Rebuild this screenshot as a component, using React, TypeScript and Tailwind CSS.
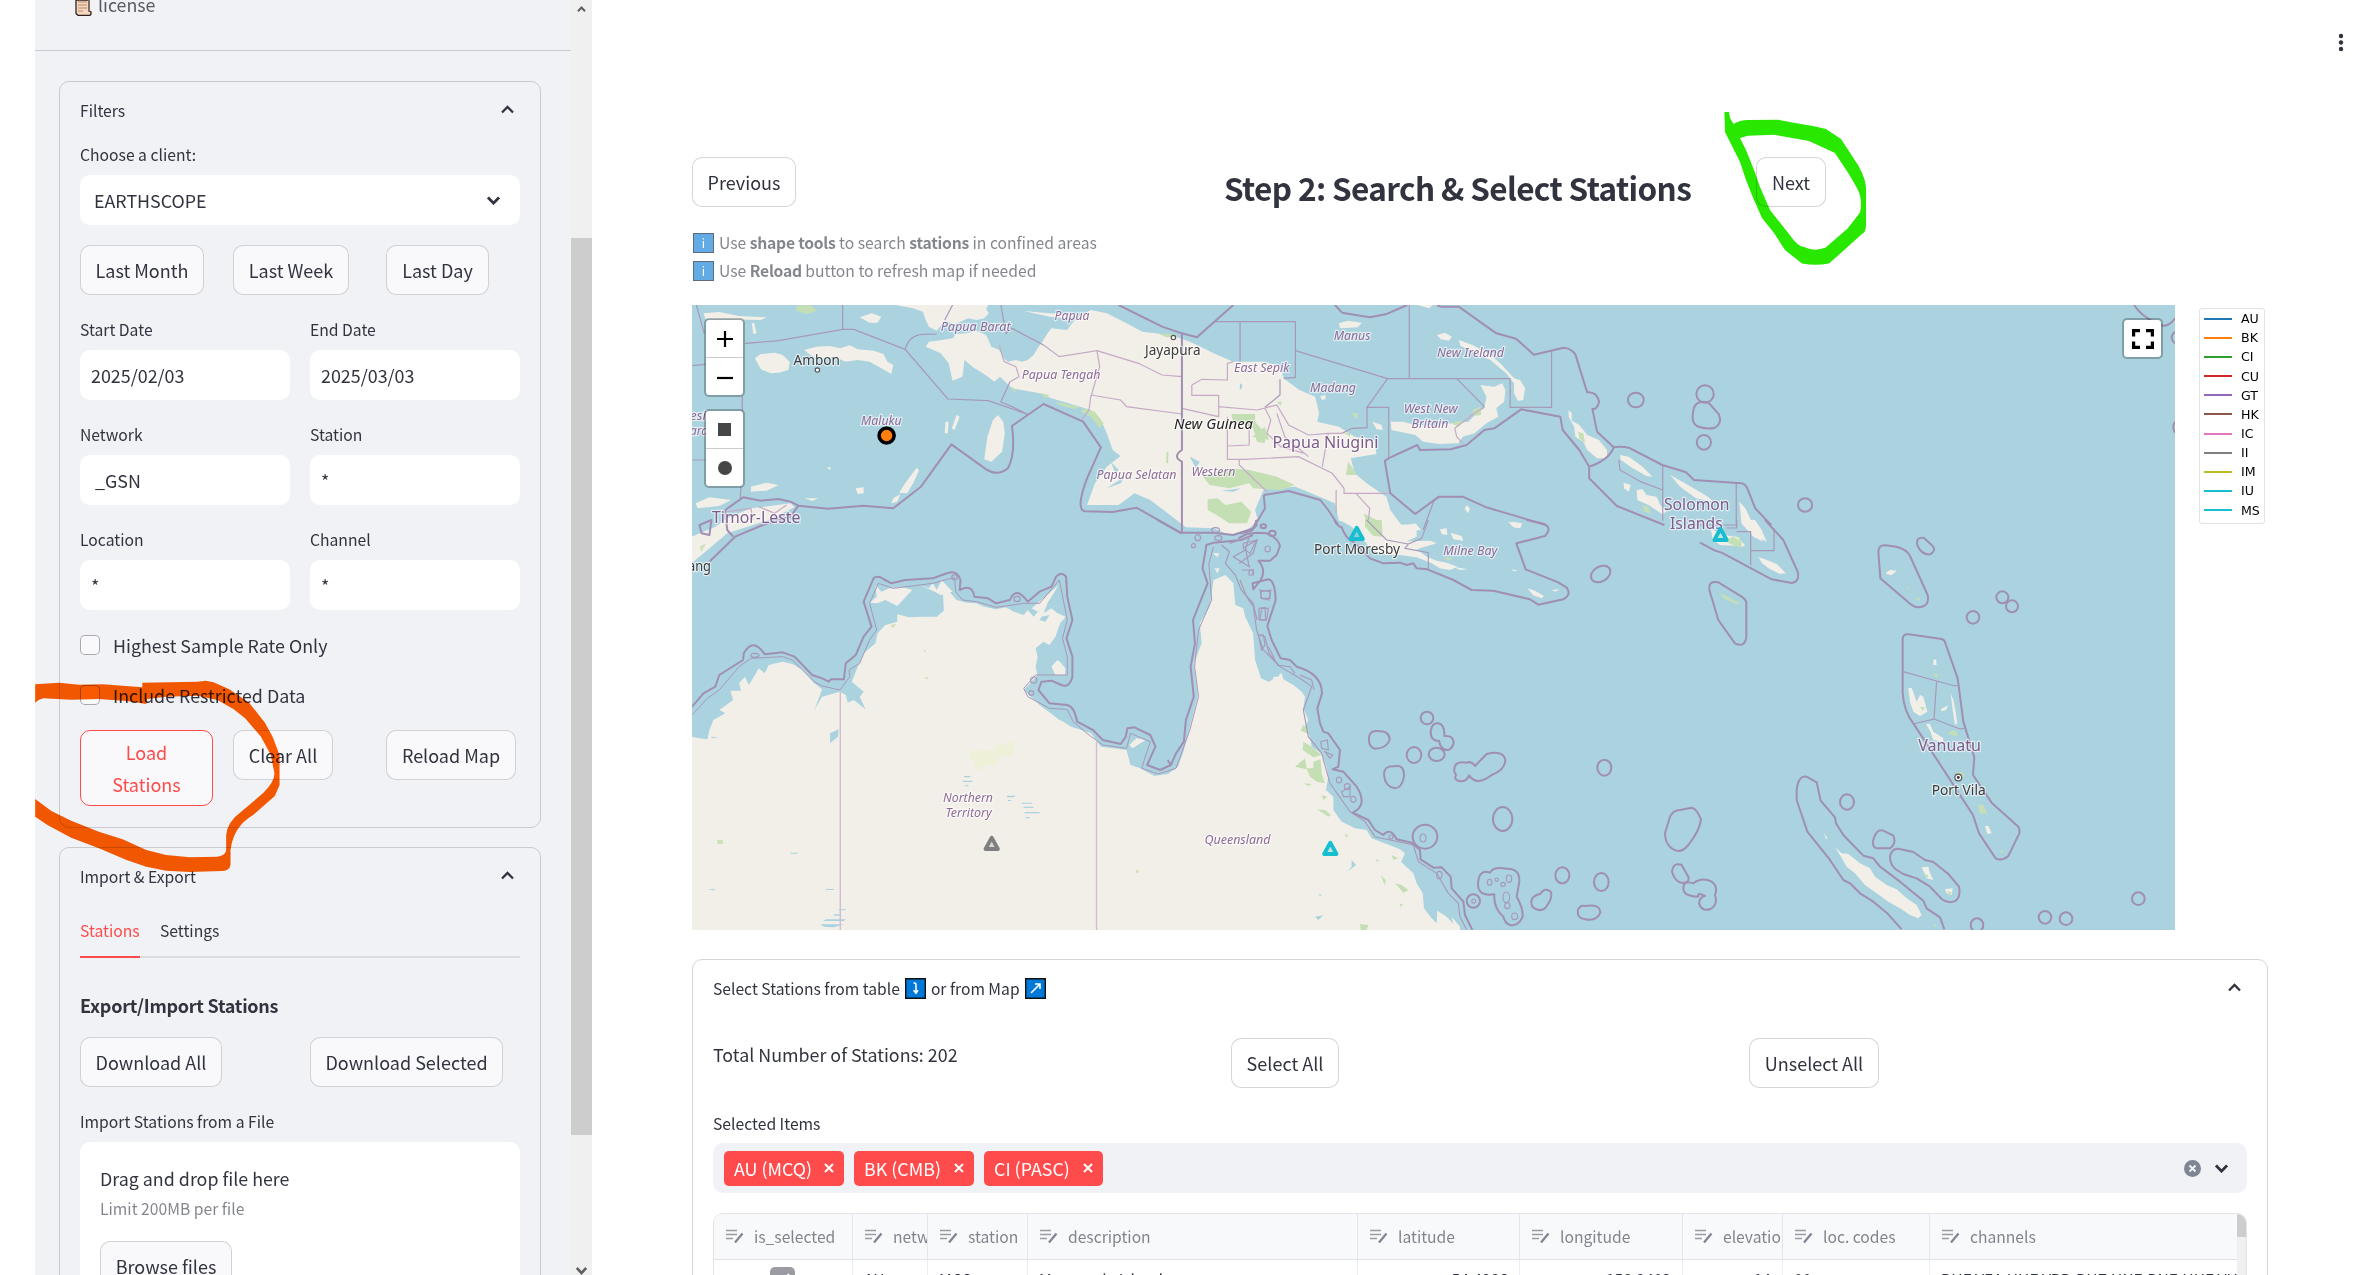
import React from "react";

const Chevron = ({ down = false, bold = false }: { down?: boolean; bold?: boolean }) => (
  <svg width="13" height="9" viewBox="0 0 13 9" className={down ? "rotate-180" : ""}>
    <path d="M1 7.6 6.5 1.9 12 7.6" fill="none" stroke="#31333f" strokeWidth={bold ? 2.8 : 2.2} />
  </svg>
);

const Button = ({ children, className = "" }: { children: React.ReactNode; className?: string }) => (
  <button
    className={`h-[50px] shrink-0 rounded-[10px] border border-[#31333f]/20 text-center text-[18px] leading-[32px] whitespace-nowrap text-[#31333f] ${className}`}
  >
    {children}
  </button>
);

const Label = ({ children }: { children: React.ReactNode }) => (
  <div className="h-[30px] pt-px text-[15.7px] leading-[18px]">{children}</div>
);

const Field = ({ label, value, inset = "pl-[11px]" }: { label: string; value: string; inset?: string }) => (
  <div className="h-[105px] w-[210px]">
    <Label>{label}</Label>
    <div className={`h-[50px] rounded-[10px] bg-white text-[17.9px] leading-[50px] ${inset}`}>{value}</div>
  </div>
);

const Check = ({ label }: { label: string }) => (
  <div className="flex h-[50px] items-start gap-[13px] text-[17.85px] leading-[20px]">
    <span className="size-5 rounded-[5px] border border-[#31333f]/40 bg-[#f9f9fb]" />
    {label}
  </div>
);

function Sidebar() {
  return (
    <aside className="ml-[35px] flex h-[1275px] w-[557px] shrink-0 overflow-hidden bg-[#f0f2f6]">
      <div className="w-[536px]">
        <div className="flex h-[51px] items-start gap-1.5 border-b border-[#c9cbd1] pl-[40px]">
          <svg width="17" height="16" viewBox="0 0 17 16">
            <path d="M1 0H14V11l2 1v2l-1 1.3H3L1 13.5Z" fill="#f6d7bf" stroke="#2b2220" strokeWidth="1.3" />
            <path d="M14 0V12" stroke="#8b6f63" strokeWidth="1.6" />
            <path d="M3 2h9M3 5h9M3 8h9M3 11h5" stroke="#b98a6d" strokeWidth="1" />
          </svg>
          <span className="-mt-[6px] text-[17.8px] leading-[20px] text-[#31333f]/80">license</span>
        </div>
        <section className="mt-[30px] ml-[24px] h-[747px] w-[482px] rounded-[10px] border border-[#31333f]/20 px-[20px]">
          <div className="flex h-[63px] items-start justify-between pt-[20px] pr-[6px] text-[15.7px] leading-[18px]">
            Filters
            <span className="pt-[3px]">
              <Chevron />
            </span>
          </div>
          <Label>Choose a client:</Label>
          <div className="flex h-[50px] items-center justify-between rounded-[10px] bg-white pr-[20px] pl-[14px] text-[17.85px]">
            EARTHSCOPE
            <Chevron down bold />
          </div>
          <div className="mt-5 grid grid-cols-[153px_153px_1fr]">
            <Button className="w-[124px] bg-[#f9f9fb]">Last Month</Button>
            <Button className="w-[116px] bg-[#f9f9fb]">Last Week</Button>
            <Button className="w-[103px] bg-[#f9f9fb]">Last Day</Button>
          </div>
          <div className="mt-[25px] grid grid-cols-2 gap-x-5">
            <Field label="Start Date" value="2025/02/03" />
            <Field label="End Date" value="2025/03/03" />
            <Field label="Network" value="_GSN" inset="pl-[15px]" />
            <Field label="Station" value="*" />
            <Field label="Location" value="*" />
            <Field label="Channel" value="*" />
          </div>
          <Check label="Highest Sample Rate Only" />
          <Check label="Include Restricted Data" />
          <div className="-mt-[5px] grid grid-cols-[153px_153px_1fr]">
            <button className="h-[76px] w-[133px] rounded-[10px] border border-[#ff4b4b] bg-[#f9f9fb] text-[18px] leading-[32px] text-[#ff4b4b]">
              Load
              <br />
              Stations
            </button>
            <Button className="w-[100px] bg-[#f9f9fb]">Clear All</Button>
            <Button className="w-[130px] bg-[#f9f9fb]">Reload Map</Button>
          </div>
        </section>
        <section className="mt-[19px] ml-[24px] h-[600px] w-[482px] rounded-[10px] border border-[#31333f]/20 px-[20px]">
          <div className="flex h-[74px] items-start justify-between pt-[20px] pr-[6px] text-[15.7px] leading-[18px]">
            Import &amp; Export
            <span className="pt-[3px]">
              <Chevron />
            </span>
          </div>
          <div className="flex h-[36px] gap-5 border-b-2 border-[#dcdde3] text-[15.7px] leading-[18px]">
            <span className="h-[36px] w-[60px] border-b-2 border-[#ff4b4b] text-[#ff4b4b]">Stations</span>
            <span>Settings</span>
          </div>
          <h4 className="mt-[35px] text-[18px] leading-[24px] font-bold tracking-[-0.27px]">Export/Import Stations</h4>
          <div className="mt-[20px] grid grid-cols-2 gap-x-5">
            <Button className="w-[142px] bg-[#f9f9fb]">Download All</Button>
            <Button className="w-[193px] bg-[#f9f9fb]">Download Selected</Button>
          </div>
          <div className="mt-[25px]">
            <Label>Import Stations from a File</Label>
          </div>
          <div className="h-[200px] rounded-[10px] bg-white pt-[24px] pl-5">
            <div className="text-[17.85px] leading-[24px]">Drag and drop file here</div>
            <div className="mt-[9px] text-[15.7px] leading-[20px] text-[#31333f]/60">Limit 200MB per file</div>
            <Button className="mt-[22px] w-[132px] bg-[#f9f9fb]">Browse files</Button>
          </div>
        </section>
      </div>
      <div className="flex w-[21px] flex-col items-center bg-[#f0f0f0]">
        <svg className="mt-1.5" width="11" height="8" viewBox="0 0 11 8">
          <path d="M.8 7 5.5 2 10.2 7" fill="none" stroke="#606060" strokeWidth="2.6" />
        </svg>
        <div className="mt-[226px] h-[897px] w-full shrink-0 bg-[#cdcdcd]" />
        <svg className="mt-[132px] shrink-0" width="11" height="8" viewBox="0 0 11 8">
          <path d="M.8 1 5.5 6 10.2 1" fill="none" stroke="#606060" strokeWidth="2.6" />
        </svg>
      </div>
    </aside>
  );
}

type Place = [string, number, number, number, "region" | "city" | "country" | "island"];
const places: Place[] = [
  ["Papua Barat", 940.7, 331.3, 70, "region"],
  ["Papua", 1054.6, 320.3, 34.8, "region"],
  ["Papua Tengah", 1021.8, 379.3, 78.7, "region"],
  ["Papua Selatan", 1096.5, 479.3, 80, "region"],
  ["Western", 1191.4, 475.7, 44, "region"],
  ["East Sepik", 1234, 372, 55.4, "region"],
  ["Maluku", 861, 425.3, 40.6, "region"],
  ["Ambon", 793.6, 365.3, 46.4, "city"],
  ["Jayapura", 1145, 355, 55.5, "city"],
  ["Timor-Leste", 712, 523, 88.4, "country"],
  ["New Guinea", 1174, 429, 79, "island"],
  ["Papua Niugini", 1272.4, 448, 106, "country"],
  ["Manus", 1333.7, 340.3, 36.8, "region"],
  ["New Ireland", 1437, 357, 67, "region"],
  ["Madang", 1310, 392, 46, "region"],
  ["West New", 1403.7, 413.3, 54, "region"],
  ["Britain", 1411.6, 428, 36.8, "region"],
  ["Solomon", 1664, 510, 65.5, "country"],
  ["Islands", 1670, 529, 52.7, "country"],
  ["Port Moresby", 1314, 554, 86, "city"],
  ["Milne Bay", 1443.3, 555.3, 54, "region"],
  ["Northern", 943, 801.7, 50, "region"],
  ["Territory", 945.5, 816.7, 46.2, "region"],
  ["Queensland", 1204.5, 843.7, 66, "region"],
  ["ang", 688, 571, 23, "city"],
  ["esi", 690, 419.5, 16, "region"],
  ["ara", 690, 434.5, 18, "region"],
  ["Vanuatu", 1918.3, 750.7, 62.7, "country"],
  ["Port Vila", 1931.7, 795, 54, "city"],
];
const placeStyle = {
  region: "text-[12.5px] italic fill-[#8d6b97]",
  city: "text-[14px] fill-[#3c3c3c]",
  country: "text-[15.5px] fill-[#7d5c8c]",
  island: "text-[14px] italic fill-[#222222]",
};

const Ring = ({ d }: { d: number[][] }) => (
  <>
    {d.map(([x, y, rx, ry, rot = 0], i) => (
      <ellipse key={i} cx={x} cy={y} rx={rx} ry={ry} transform={`rotate(${rot} ${x} ${y})`} />
    ))}
  </>
);

const Triangle = ({ x, y, color }: { x: number; y: number; color: string }) => (
  <path
    d={`M${x} ${y - 5.8}L${x + 6.2} ${y + 5.5}H${x - 6.2}Z`}
    fill={color}
    fillOpacity="0.2"
    stroke={color}
    strokeWidth="3.8"
    strokeLinejoin="round"
  />
);

function MapView() {
  return (
    <svg width="1483" height="625" viewBox="692 305 1483 625" className="block bg-[#aad3df]">
      {/* northern half */}
      <g transform="translate(660 100) scale(.3954 .33333)" className="[&_*]:[vector-effect:non-scaling-stroke]">
        <g fill="#f2efe9">
          <path d="M595 615 640 625 665 635 672 660 680 680 700 692 720 662 745 672 760 665 780 655 800 660 820 655 832 640 825 628 830 615Z" />
          <path d="M672 740 680 725 700 722 740 715 750 702 775 700 800 692 825 705 838 740 858 750 868 775 880 785 900 780 915 785 930 780 945 765 955 745 970 720 980 700 990 685 1030 690 1045 665 1060 650 1075 640 1090 630 1130 640 1180 670 1220 695 1290 705 1340 725 1370 742 1400 760 1450 785 1525 785 1568 798 1577 835 1617 870 1657 890 1667 940 1662 965 1717 980 1757 1010 1807 1020 1812 1062 1747 1075 1757 1120 1787 1150 1837 1190 1847 1230 1877 1278 1790 1278 1717 1262 1707 1210 1647 1180 1607 1160 1527 1168 1505 1230 1512 1262 1485 1290 1440 1305 1400 1285 1330 1282 1290 1245 1240 1200 1200 1180 1160 1215 1080 1215 1100 1150 1130 1100 1165 1068 1145 1050 1130 1000 1115 960 1090 930 1020 905 990 895 960 880 890 865 860 830 845 845 830 830 790 800 770 780 765 830 740 842 730 790 710 760Z" />
          <path d="M920 633 985 640 1060 645 1030 655 985 650Z" />
          <path d="M240 775 255 762 290 758 310 765 328 785 325 810 300 818 280 820 255 808Z" />
          <path d="M365 750 395 740 430 738 455 745 480 736 500 748 540 752 565 762 575 785 590 795 585 822 560 805 530 785 500 780 470 785 440 770 400 775 380 765Z" />
          <path d="M110 640 150 636 200 648 270 652 255 660 180 658 115 658ZM232 670 238 668 244 700 236 702ZM505 652 535 640 560 650 550 668 530 668ZM842 960 855 945 868 965 872 1000 865 1055 838 1085 820 1078 828 1010ZM750 945 758 950 745 990 738 985ZM722 965 730 965 728 1000 720 1000ZM645 1110 650 1103 655 1112 640 1150 625 1180 605 1178 620 1150ZM230 1160 270 1148 300 1155 270 1172 230 1175ZM90 1210 125 1192 180 1200 150 1218 95 1225ZM495 1165 515 1162 515 1180 500 1182ZM590 1195 608 1182 600 1205 585 1210ZM422 1103 432 1101 430 1110ZM365 1195 400 1195 385 1203Z" />
          <path d="M170 1255 230 1225 330 1210 340 1222 270 1262 170 1300 150 1320 80 1390 80 1310 140 1280Z" />
          {/* Bismarck archipelago and the Solomons */}
          <path d="M1717 670 1740 662 1775 668 1765 682 1720 685ZM1965 705 1985 698 2003 710 1995 722 1975 718ZM2020 720 2055 735 2075 748 2100 765 2125 790 2145 815 2160 835 2175 840 2188 865 2183 900 2170 903 2160 880 2160 850 2140 820 2100 780 2060 755 2025 738Z" />
          <path d="M2075 855 2110 860 2130 850 2138 870 2135 905 2115 925 2120 950 2090 970 2060 1000 2030 1010 2020 1030 1970 1032 1930 1025 1910 1005 1850 990 1848 965 1880 965 1910 975 1960 978 2000 970 2045 965 2065 940 2085 925 2090 890Z" />
          <path d="M1802 965 1825 975 1828 990 1812 988ZM1670 888 1683 885 1683 898 1674 900Z" />
          <path d="M2298 930 2306 940 2306 962 2325 975 2345 1005 2375 1020 2395 1050 2395 1075 2370 1075 2345 1050 2335 1025 2315 1010 2312 980 2298 950ZM2428 1065 2450 1070 2485 1100 2510 1130 2495 1128 2460 1105 2430 1080ZM2555 1125 2600 1155 2650 1190 2665 1205 2620 1195 2580 1160ZM2437 1148 2455 1155 2450 1175 2438 1165ZM2470 1170 2485 1168 2495 1185 2520 1190 2530 1215 2545 1235 2535 1243 2500 1215 2472 1200ZM2730 1205 2745 1225 2765 1275 2790 1325 2765 1310 2735 1270Z" />
          <path d="M1915 615 1955 615 1945 625ZM2040 1215 2048 1225 2045 1240 2035 1228ZM2155 1265 2180 1270 2175 1285 2160 1280ZM1880 1280 1910 1270 1925 1290 1890 1292Z" />
        </g>
        <g fill="#c5dfb5">
          <path d="M1372 1128 1440 1105 1490 1110 1560 1130 1605 1155 1570 1170 1530 1168 1500 1165 1490 1150 1440 1165 1390 1155ZM1385 1198 1410 1195 1430 1215 1470 1205 1495 1235 1485 1270 1440 1270 1400 1240 1385 1230ZM1445 942 1505 942 1505 965 1530 1000 1530 1030 1510 1025 1500 985 1448 960ZM1070 925 1100 935 1122 970 1112 985 1090 950 1065 935ZM1740 1085 1750 1100 1762 1125 1735 1125ZM1780 1240 1820 1265 1835 1290 1790 1290ZM345 618 380 615 397 632 370 642 345 632ZM960 878 985 885 975 895ZM1000 905 1060 920 1050 928 1010 915ZM885 858 900 868 895 875ZM1262 702 1300 702 1310 710 1280 712ZM1281 1055 1286 1055 1285 1090 1280 1090ZM1498 1010 1530 980 1540 1020ZM2055 930 2075 920 2077 945 2060 948ZM2000 970 2030 960 2020 980ZM1750 940 1765 940 1762 960ZM1725 995 1745 1000 1745 1010ZM2322 995 2335 1000 2340 1030 2325 1015ZM2485 1215 2500 1220 2505 1240 2490 1235ZM1560 905 1572 905 1570 918Z" />
        </g>
        <path d="M1467 850 1473 855 1470 870 1466 865ZM1340 1070 1365 1085 1355 1105ZM1130 1165 1175 1130 1165 1150ZM1420 1172 1470 1165 1450 1175ZM1140 1085 1160 1110 1152 1120Z" fill="#aad3df" />
        <g fill="none" stroke="#a798b8" strokeWidth="1.2">
          <path d="M462 615V688M215 730 300 722 462 688 490 688 620 748 728 897 830 902 930 943M620 748Q630 705 665 703L700 702M740 615 720 660M862 615 875 700 890 685 970 735M208 888V960M205 1160 203 1195M82 797 115 793M82 1080H115M92 615 112 700M930 943 890 920 862 906 885 845M1405 665H1607V832L1578 835M1467 665V785M1895 615V835M1607 752 1840 836H2150V922H2255V752M1840 836 1788 922H1843V1075M1788 922V983L1750 985 1725 1000M2015 836 2085 920M2536 1097V1262M2722 1152V1275H2600M2425 1080 2428 1110 2480 1145 2536 1170M1958 1200 1930 1290M1568 838V885L1530 922" />
          <path d="M858 735 870 785 900 800 908 830 885 845M970 735 1010 770 1105 752 1112 800 1090 890M1105 752 1210 790 1270 825 1320 830M1090 885 1165 900 1180 920 1320 942M1090 885 1085 930 1068 958M1320 925 1413 950V920L1510 930 1560 915 1590 975 1640 1005 1690 1000 1725 1000M1345 855 1370 838 1435 840V790L1450 785M1345 855V886H1413V930M1435 950V1078L1480 1078 1615 1070 1700 1120 1730 1165V1180H1845M1465 1080V1095L1535 1175M1490 970 1490 1035 1435 1038M1530 925 1545 960 1535 1000 1570 1040 1630 1060M1560 940 1580 1010 1640 1070M1690 1000 1675 1100M1710 1170V1240M1760 1180 1795 1225 1790 1275M2085 920 2060 940 2010 985 2015 1010 2030 1030M170 1235 230 1225 235 1260M250 1220 290 1240 320 1215" stroke="#c5a9c6" />
        </g>
        <g fill="none" stroke="#a08fb3" strokeWidth="2" strokeLinejoin="round">
          <path d="M1160 615 1270 680 1320 700V1050Q1295 1070 1320 1085V1300M1320 700 1358 712 1450 615M165 1230 210 1192 255 1202 300 1197 330 1205 350 1217 425 1226 515 1217 590 1225 660 1160 737 1033 825 1108 Q855 1130 880 1105 900 1060 890 978L970 912 1070 965 1115 1042 1080 1135 Q1050 1230 1075 1234L1145 1236 1205 1223 1320 1300M350 1217 330 1250 260 1275 190 1310 125 1385M165 1230 170 1290 185 1310M100 1275 105 1300 125 1305 130 1260Z" />
          <path d="M1707 615 1725 638 1795 652 1835 643 1890 615M1965 615 1975 620 2020 620 2115 700 2165 716 2210 764 2285 743 Q2305 745 2315 763L2345 877Q2370 875 2375 905 2370 930 2358 927L2370 995 2412 1042Q2400 1080 2350 1100M2412 1042Q2430 1038 2450 1043L2535 1095 2595 1117 2615 1140 2735 1150Q2745 1152 2750 1165L2770 1225 2810 1275M1842 1075 1833 1083 1847 1180 1910 1242 1970 1190 2030 1190 2090 1222 2170 1250 2240 1275M1842 1075 1915 1035 1922 1050 2000 1048 2040 1035 2085 990 2110 985 2178 928 2277 950 2283 990 2325 1050 2350 1100V1135L2420 1218 2540 1275M1527 1185 1590 1173 1670 1200 1690 1230 1715 1275M1527 1185 1530 1225 1510 1265" />
          <Ring d={[[2468, 900, 20, 22], [2643, 882, 22, 26], [2640, 1027, 18, 22], [2896, 1215, 18, 20]]} />
          <path d="M2630 907Q2646 902 2655 912L2678 943Q2687 970 2668 983 2645 990 2622 978 2607 965 2613 935 2615 912 2630 907Z" />
        </g>
      </g>
      {/* northern Australia */}
      <g transform="translate(660 520) scale(.3954 .33333)" className="[&_*]:[vector-effect:non-scaling-stroke]">
        <path
          fill="#f2efe9"
          d="M81 650 100 655 120 658 125 630 135 600 165 580 150 570 185 540 178 512 205 512 200 490 215 470 225 495 240 465 250 445 265 460 275 435 310 425 335 432 360 450 390 490 410 508 400 540 390 570 410 530 455 515 470 525 475 548 490 540 520 568 505 530 515 515 485 485 500 440 515 400 545 370 550 340 570 315 600 305 600 283 630 292 665 290 700 290 718 272 715 210 730 212 750 240 775 248 800 250 820 260 850 268 875 262 895 275 920 285 930 270 945 290 985 235 970 280 990 265 1005 280 1026 290 1012 310 1000 350 985 375 970 365 950 385 955 410 950 440 955 465 920 510 960 555 1000 590 1040 620 1090 640 1115 680 1180 690 1190 735 1215 745 1250 768 1285 762 1310 740 1325 690 1340 620 1360 530 1350 430 1370 370 1365 310 1390 260 1400 180 1430 165 1450 190 1455 255 1475 265 1480 290 1500 340 1505 420 1520 475 1540 485 1570 465 V1230H81Z"
        />
        <path fill="#f2efe9" d="M545 195 560 215 580 205 610 200 638 210 600 258 570 240 550 250 530 248 548 230ZM655 195 680 205 690 190 700 210 712 180 740 215 710 225 690 212ZM1187 675 1205 655 1228 660 1195 685ZM1005 420 1015 430 1025 445 1025 465 1000 465 990 440ZM940 265 1008 195 985 240 955 275ZM1398 100 1415 100 1410 112ZM1402 145 1415 145 1410 160Z" />
        <path fill="#aad3df" d="M430 640 452 628 450 650 430 670ZM770 768h15v4h-18ZM765 782h25v4h-23ZM770 796h10v3h-8ZM878 827h22l-5 5h-18ZM880 840h8v3h-8ZM915 848h25v3h-25ZM920 860h24v4h-24ZM922 876h38v4h-38ZM925 891h10v4h-10ZM420 1198 470 1198 465 1203 412 1203ZM405 1213 465 1213 440 1222 415 1220ZM440 1183h18v4h-18ZM452 1168h18v3h-18ZM330 998h18v3h-18ZM420 1107h20v3h-20ZM120 1109 140 1106 135 1111ZM130 650 150 652 130 655ZM965 290 985 285 975 305 960 300ZM990 580 1040 585 1035 605 1010 600ZM975 400 985 415 975 430Z" />
        <path fill="#eef0d8" d="M785 692 845 690 850 675 875 675 880 662 893 665V708H855L850 735 820 735 815 748H795V720H785Z" />
        <path fill="#cfe0bb" d="M145 960h14v12h-14ZM1204 1050h6v8h-6ZM582 315 597 312 590 325ZM100 80 117 70 105 95ZM668 390h3v6h-3ZM670 472h8v4h-8Z" />
        <g fill="none" stroke="#d3bcd3" strokeWidth="1.4">
          <path d="M456 515V1230M1104 665V1230" />
        </g>
        <path
          fill="none"
          stroke="#a798b8"
          strokeWidth="1"
          d="M81 585 120 535 150 510 200 440 230 415 310 410 335 420 390 485 410 498 455 510 480 470 478 450 505 430 530 360 548 330 530 250 552 190 590 205 690 190 745 172 748 215 765 240 800 245 850 262 920 250 960 250 1010 180 1030 300 1018 355 1030 410 1030 465 950 465 920 505 930 530 985 565 1030 568 1045 605 1085 645 1120 675 1180 685 1190 640 1240 665 1218 745 1260 762 1305 745 1340 630 1362 530 1352 440 1362 330 1395 240 1388 130 1400 80"
        />
        <path
          fill="none"
          stroke="#a08fb3"
          strokeWidth="2"
          strokeLinejoin="round"
          d="M81 560 110 520 140 500 150 465 210 420 212 400 Q235 350 265 403L310 397 340 410 385 465 410 475 427 485 432 478 465 478 470 430 495 405 515 350 535 320 515 245 540 175 Q550 165 565 177L585 190 620 180 690 175 720 162 Q750 145 760 180L758 210Q790 190 795 230L830 235 850 250 885 240 Q900 195 930 245L960 215 990 200 1002 170 Q1015 152 1027 170L1030 230 1043 300 1028 355 1043 410 1043 470 Q1035 505 1015 495L990 482 965 485 957 510 985 550 1030 555 Q1048 560 1055 605L1095 630 1120 660 1165 672 1178 650 1182 625 1200 622 1240 645 1253 680 1232 735 1265 750 1292 735 1285 722 1292 735 1305 700 1325 665 1330 600 1350 530 1342 440 1353 370 1348 300 1368 240 1385 190 1372 145 1382 75 1400 68 1470 60 1500 45M1258 0 1315 38 1400 38 1450 45 1500 25 1510 0"
        />
        <g fill="none" stroke="#a798b8" strokeWidth="1.2">
          <Ring d={[[1360, 53, 7, 9], [1349, 77, 5, 6], [1405, 30, 10, 7], [1412, 54, 9, 7], [745, 172, 7, 8], [903, 237, 8, 8], [240, 406, 10, 6], [939, 519, 6, 7], [945, 480, 8, 9]]} />
          <path d="M1420 75 1440 95 1430 130 1455 165 1470 210 1500 250 1510 300M1440 70 1490 50 1480 90 1450 110 1490 140 1480 80 1510 60 1500 100 1465 130M1520 215 1545 210 1540 240 1520 235ZM1515 265 1530 262 1532 300 1515 298ZM1515 345 1530 350 1540 400 1568 440M1490 150h10v15h-10Z" />
        </g>
      </g>
      {/* Coral Sea */}
      <g transform="translate(1240 520) scale(.33333)" className="[&_*]:[vector-effect:non-scaling-stroke]">
        <g fill="#f2efe9">
          <path d="M118 470V462L125 460 130 478 160 495 185 515 195 530 190 565 205 600 195 620 210 650 215 680 245 700 260 740 265 770 258 810 280 830 280 870 305 905 345 925 380 930 395 955 440 972 480 988 495 1000 483 1025 520 1060 530 1090 548 1120 552 1165 575 1195 590 1210 592 1172 620 1190 640 1212 635 1190 660 1220V1230H100V470Z" />
          <path d="M300 0 335 20 370 60 400 92 440 105 480 105 530 112 575 130 600 145 630 150 652 140 620 128 590 122 560 110 530 88 590 70 570 62 500 64 530 50 530 12 470 15 450 0Z" />
          <path d="M600 28 620 25 622 45 605 42ZM632 38 665 48 670 62 640 58ZM805 5 845 12 840 25 820 22ZM862 205 885 212 912 228 905 235 880 226ZM935 210 958 208 948 215ZM815 148 835 152 820 154ZM640 140 682 148 660 150ZM1413 28 1440 40 1490 55 1500 78 1440 75 1418 60Z" />
        </g>
        <path fill="#c5dfb5" d="M375 0 425 0 428 50 400 48 375 20ZM190 615 205 630 200 640 182 632ZM190 665 215 680 245 705 220 712 188 690ZM165 740 195 715 200 745 220 745 220 725 242 718 245 760 255 790 230 785 210 770 200 748ZM190 790 215 792 205 798ZM245 825 262 830 250 840ZM232 868 255 870 272 885 265 890ZM422 1065 437 1080 435 1098ZM455 1005 475 1015 460 1020ZM465 1090 485 1095 505 1110 490 1118ZM480 1150 490 1155 480 1160ZM360 1212 385 1215 380 1230H362ZM610 110 640 115 625 122ZM318 940 325 950 315 950ZM405 1018 418 1020 412 1025ZM1480 50 1500 50V80L1485 75Z" />
        <path fill="#aad3df" d="M335 1020 348 1035 322 1055 335 1040ZM225 1190 250 1186 235 1200ZM235 1122 246 1124 240 1128Z" />
        <g fill="none" stroke="#a798b8" strokeWidth="1.1">
          <path d="M0 180 20 230 40 260 50 330 70 390 120 440 180 475 215 500 190 570 205 650 245 700 270 790 330 875 375 905 405 950 520 975 535 1025 590 1060 625 1120 655 1150 660 1190 680 1230M565 0 545 55 505 72 495 85 565 98V150M380 0 440 60 505 72M55 345h15l5 30-10 15ZM85 380 105 420M110 435 150 440 165 460M180 465 215 480 222 510M10 70 50 60 30 100 10 85ZM5 150 40 150 40 165M60 210 90 215 90 235 65 235ZM65 265h20l-5 35H60ZM242 665 262 660 265 690 245 685ZM255 695 278 705 270 715ZM305 815 330 800 330 830 310 830Z" />
          <Ring d={[[83, 87, 8, 9], [297, 780, 8, 9], [322, 800, 9, 9], [340, 838, 8, 9], [453, 951, 6, 6], [549, 954, 9, 12], [598, 1065, 8, 11], [701, 1143, 6, 6], [749, 1087, 7, 9], [770, 1079, 5, 5], [807, 1076, 8, 11], [789, 1093, 7, 6], [799, 1132, 10, 16], [802, 1157, 8, 9], [824, 1189, 9, 10]]} />
        </g>
        <g fill="none" stroke="#a08fb3" strokeWidth="2" strokeLinejoin="round">
          <path d="M-5 55 20 42 50 38 80 40 Q115 55 120 78 L110 105 90 122 55 122 Q80 150 62 180L40 208 38 190 85 178 Q105 180 107 240L82 318 95 360 122 415 150 420 170 440 Q245 460 246 520L232 565 240 610 250 635 265 640 300 690 295 740 278 748 310 755 350 800 Q385 855 338 878L385 900 405 930 430 945Q450 920 470 958L515 968 540 990 542 1018 580 1043 605 1042 632 1070 635 1105 670 1145 675 1185 697 1230" />
          <path d="M283 0Q290 18 305 22 320 60 340 65L390 115 430 130 480 128 500 135 520 130 530 145 562 148 640 180 695 210 760 212 870 238 895 254 970 238Q995 225 980 203L955 187 857 148 829 70 915 48Q940 20 905 10L860 0M0 40 35 32 50 15 48 0" />
          <Ring d={[[1082, 162, 31, 22, -30], [1093, 743, 21, 24], [561, 594, 19, 19], [522, 705, 22, 24], [590, 703, 24, 20], [967, 1066, 21, 24], [1084, 1086, 22, 27], [788, 897, 29, 36], [700, 1143, 20, 20], [555, 950, 37, 36], [70, 19, 8, 6], [97, 40, 10, 8]]} />
          <path d="M387 660Q385 632 410 633 450 632 449 660 440 685 405 686 387 682 387 660ZM432 765Q432 735 465 739 493 732 492 770 485 805 465 805 435 800 432 765ZM600 663Q572 665 572 635 575 608 595 610 615 615 613 648 640 645 641 670 630 700 608 685 595 670 600 663M643 755Q640 720 680 728 695 722 705 738L740 702Q790 690 796 720 795 750 755 765 710 800 687 766 680 785 660 784 640 780 648 765ZM714 1095Q715 1045 750 1058 760 1038 800 1046 840 1045 838 1085L830 1130Q850 1165 848 1190 835 1220 810 1215 795 1210 790 1190 760 1165 763 1123 715 1130 714 1095ZM900 1122Q915 1100 932 1115 940 1135 915 1165 895 1178 877 1160 865 1130 900 1122ZM1035 1158Q1080 1150 1081 1178 1070 1205 1035 1198 1010 1195 1014 1170 1020 1155 1035 1158ZM1275 940 1290 890Q1300 870 1320 870L1355 863Q1370 865 1383 898 1380 930 1345 975 1320 1005 1295 985 1275 970 1275 940ZM1296 1055Q1300 1025 1325 1035L1345 1070Q1350 1090 1325 1088 1305 1085 1296 1055ZM1330 1105Q1330 1080 1360 1090 1385 1070 1415 1085 1435 1100 1425 1125 1435 1155 1410 1168 1385 1175 1377 1150 1380 1130 1395 1128 1370 1115 1375 1130 1330 1130 1330 1105Z" />
        </g>
      </g>
      {/* Solomon Sea, Vanuatu and New Caledonia */}
      <g transform="translate(1700 520) scale(.33333)" className="[&_*]:[vector-effect:non-scaling-stroke]">
        <g fill="#f2efe9">
          <path d="M33 28 60 45 110 50 135 75 125 82 95 72 65 70 40 55ZM130 0 165 0 185 30 200 65 180 55 155 25ZM176 112 195 118 230 132 258 160 240 162 205 145 185 128ZM558 158 570 150 590 152 575 165 560 163ZM700 420 708 418 710 435 700 435ZM625 505 635 503 650 545 660 525 670 530 682 575 660 588 640 575 630 545ZM722 568 745 556 738 570 725 573ZM752 520 760 540 765 565 772 610 765 615 758 570ZM678 612 690 612 700 635 730 655 730 665 700 660 690 632ZM855 918 865 918 875 940 862 942ZM665 1042 685 1040 690 1060 700 1080 680 1075ZM735 1108 758 1105 755 1125 740 1120ZM745 640 765 632 770 642Z" />
          <path d="M405 982 425 1000 445 1002 480 1030 510 1045 525 1070 560 1095 590 1108 620 1135 650 1155 665 1185 655 1195 630 1185 600 1165 565 1145 530 1120 495 1095 465 1060 440 1040 420 1005ZM372 938 382 955 378 958Z" />
        </g>
        <path fill="#c5dfb5" d="M70 62 100 50 125 65 125 82 105 78ZM62 220 85 232 118 248 110 253 70 235ZM648 232 662 236 655 243ZM700 460 715 462 708 475ZM660 560 675 562 668 573ZM745 640 758 630 768 635 775 650 755 645ZM770 755 790 758 795 770 775 772ZM835 853 850 855 862 882 840 880ZM898 990 910 992 905 1000ZM672 1062 685 1065 682 1075ZM742 1112 755 1118 748 1128ZM698 1212 710 1215 706 1222ZM620 200 628 203 622 206Z" />
        <g fill="none" stroke="#a798b8" strokeWidth="1.2">
          <path d="M80 24H110V0M110 35H152V135M152 92H222V25M609 455 710 483 765 498 778 495M710 483 702 597 640 612M702 597 780 627 793 625" />
        </g>
        <g fill="none" stroke="#a08fb3" strokeWidth="2" strokeLinejoin="round">
          <path d="M195 0 250 60 293 155Q300 185 275 189L215 178 65 98 45 92 0 68" />
          <path d="M28 210Q25 180 55 187L125 230Q140 240 139 252V350Q135 385 105 370L55 300Z" />
          <path d="M535 95Q535 75 555 76L590 80Q620 88 630 108L683 225Q690 260 655 262 645 262 632 253L541 175ZM608 355Q610 340 627 343L725 357Q735 360 737 372L773 475 790 605 823 712 819 765 875 848 955 920Q960 930 958 940L925 1008Q905 1025 887 1015L837 940 819 885 640 610Q612 575 608 520ZM653 78Q645 50 672 54L695 75Q712 90 690 103 665 105 653 78ZM520 960Q530 925 550 932L580 947Q590 970 570 985H530Q515 980 520 960ZM570 1010Q575 985 595 986L640 996 675 1020 700 1026 745 1062 777 1100Q785 1145 750 1147 735 1145 725 1137L690 1100 650 1075 610 1062 590 1050Q570 1035 570 1010Z" />
          <path d="M605 1228 560 1178 520 1145 480 1120 450 1090 430 1080 390 1020 322 935 290 840V810Q295 765 320 770L350 787 362 842 405 892 408 910 430 945 490 1007 520 1015 540 1040 600 1085 670 1142 680 1165 720 1192 733 1228" />
          <Ring d={[[441, 846, 21, 23], [819, 292, 19, 19], [907, 232, 18, 18], [936, 259, 18, 18], [1035, 1192, 19, 19], [1098, 1196, 19, 19], [1315, 1136, 19, 19], [831, 1215, 19, 20]]} />
          <path d="M1302 -645Q1325 -610 1370 -590 1400 -570 1425 -605M1425 -565Q1405 -548 1425 -530M1425 -295Q1415 -280 1425 -262" />
        </g>
      </g>
      <g className="font-['Noto_Sans'] [paint-order:stroke]" stroke="#ffffff" strokeOpacity="0.6" strokeWidth="2.5" strokeLinejoin="round">
        {places.map(([name, x, y, w, kind]) => (
          <text key={name} x={x} y={y} textLength={w} lengthAdjust="spacingAndGlyphs" className={placeStyle[kind]}>
            {name}
          </text>
        ))}
      </g>
      <g fill="#fff" stroke="#555" strokeWidth="1.2">
        <circle cx="817.4" cy="370" r="2.2" />
        <circle cx="1173.4" cy="337.5" r="2.2" />
        <circle cx="1958.3" cy="777.5" r="3.4" />
      </g>
      <circle cx="1958.3" cy="777.5" r="1.4" fill="#333" />
      <circle cx="886.6" cy="435.5" r="7.5" fill="#ff7f0e" stroke="#000" strokeWidth="3.6" />
      <Triangle x={1356.7} y={533.5} color="#17becf" />
      <Triangle x={1720.5} y={534.5} color="#17becf" />
      <Triangle x={1330.3} y={848.5} color="#17becf" />
      <Triangle x={991.7} y={843.5} color="#7f7f7f" />
    </svg>
  );
}

const InfoIcon = () => (
  <span className="flex h-5 w-[21px] items-center justify-center border border-[#5f6b76] bg-[#62abe6] font-['Noto_Sans'] text-[13px] leading-none text-white">
    i
  </span>
);

const legend: [string, string][] = [
  ["AU", "bg-[#1f77b4]"],
  ["BK", "bg-[#ff7f0e]"],
  ["CI", "bg-[#2ca02c]"],
  ["CU", "bg-[#d62728]"],
  ["GT", "bg-[#9467bd]"],
  ["HK", "bg-[#8c564b]"],
  ["IC", "bg-[#e377c2]"],
  ["II", "bg-[#7f7f7f]"],
  ["IM", "bg-[#bcbd22]"],
  ["IU", "bg-[#17becf]"],
  ["MS", "bg-[#17becf]"],
];

const columns: { name: string; value: string; width: string; right?: boolean }[] = [
  { name: "is_selected", value: "", width: "w-[139px]" },
  { name: "network", value: "AU", width: "w-[75px]" },
  { name: "station", value: "MCQ", width: "w-[100px]" },
  { name: "description", value: "Macquarie Island", width: "w-[330px]" },
  { name: "latitude", value: "-54.4986", width: "w-[162px]", right: true },
  { name: "longitude", value: "158.9403", width: "w-[163px]", right: true },
  { name: "elevation", value: "14", width: "w-[100px]", right: true },
  { name: "loc. codes", value: "00,", width: "w-[147px]" },
  { name: "channels", value: "BHE,VEA,UHE,VPD,BHZ,UNE,BNE,HHE,VH", width: "w-[307px]" },
];

const EditIcon = () => (
  <svg width="18" height="15" viewBox="0 0 18 15" className="shrink-0" fill="none" stroke="#9a9ba3">
    <path d="M0 1.5H11M0 5.5H11M0 9.5H7" strokeWidth="1.6" />
    <path d="M9 13.5 16.5 4.5" strokeWidth="2.2" stroke="#808495" />
  </svg>
);

const Tag = ({ text, width }: { text: string; width: string }) => (
  <span className={`flex h-[35px] items-center justify-between rounded-[5px] bg-[#ff4b4b] pr-[10px] pl-[10px] text-[17.85px] text-white ${width}`}>
    {text}
    <svg width="10" height="10" viewBox="0 0 10 10">
      <path d="M1 1 9 9M9 1 1 9" stroke="#fff" strokeWidth="2" />
    </svg>
  </span>
);

function Main() {
  return (
    <main className="flex h-[1275px] flex-1 flex-col overflow-hidden pl-[100px]">
      <div className="flex h-[157px] shrink-0 items-start justify-end pt-[33px] pr-[9px]">
        <svg width="6" height="19" viewBox="0 0 6 19" fill="#31333f">
          <circle cx="3" cy="3" r="2.2" />
          <circle cx="3" cy="9.5" r="2.2" />
          <circle cx="3" cy="16" r="2.2" />
        </svg>
      </div>
      <header className="flex h-[76px] shrink-0 items-start">
        <Button className="w-[104px] bg-white">Previous</Button>
        <h3 className="ml-[428px] w-[532px] pt-[10px] text-[31.5px] leading-[40px] font-bold tracking-[-0.63px] whitespace-nowrap">
          Step 2: Search &amp; Select Stations
        </h3>
        <Button className="w-[70px] bg-white">Next</Button>
      </header>
      <div className="flex h-[72px] shrink-0 flex-col gap-2 pl-px text-[15.7px] leading-[20px] text-[#31333f]/60 [&_b]:font-bold [&_b]:tracking-[-0.25px]">
        <div className="flex h-5 items-center gap-[5px]">
          <InfoIcon />
          <p>
            Use <b>shape tools</b> to search <b>stations</b> in confined areas
          </p>
        </div>
        <div className="flex h-5 items-center gap-[5px]">
          <InfoIcon />
          <p>
            Use <b>Reload</b> button to refresh map if needed
          </p>
        </div>
      </div>
      <div className="flex h-[654px] shrink-0 items-start">
        <div className="relative">
          <MapView />
          <div className="absolute top-[13px] left-[12px] flex flex-col gap-[12px]">
            <div className="h-[79px] w-[41px] rounded-[5px] border-2 border-[#00000040] bg-white bg-clip-padding">
              <div className="flex h-[38px] items-center justify-center border-b border-[#cccccc]">
                <svg width="16" height="16" viewBox="0 0 16 16">
                  <path d="M0 8H16M8 0V16" stroke="#000" strokeWidth="2.2" />
                </svg>
              </div>
              <div className="flex h-[37px] items-center justify-center pt-0.5">
                <svg width="16" height="4" viewBox="0 0 16 4">
                  <path d="M0 2H16" stroke="#000" strokeWidth="2.2" />
                </svg>
              </div>
            </div>
            <div className="h-[79px] w-[41px] rounded-[5px] border-2 border-[#00000040] bg-white bg-clip-padding">
              <div className="flex h-[38px] items-center justify-center border-b border-[#cccccc]">
                <div className="size-[13px] bg-[#464646]" />
              </div>
              <div className="flex h-[37px] items-center justify-center">
                <div className="size-[14px] rounded-full bg-[#464646]" />
              </div>
            </div>
          </div>
          <div className="absolute top-[13px] right-[12px] flex size-[41px] items-center justify-center rounded-[5px] border-2 border-[#00000040] bg-white bg-clip-padding">
            <svg width="22" height="20" viewBox="0 0 22 20" fill="none" stroke="#000" strokeWidth="3.2">
              <path d="M1.6 7.5V1.6H8M14 1.6h6.4V7.5M20.4 12.5v5.9H14M8 18.4H1.6V12.5" />
            </svg>
          </div>
        </div>
        <div className="mt-[3px] ml-[24px] flex h-[216px] w-[66px] flex-col rounded-[3px] border border-[#e3e3e3] pl-1 font-['DejaVu_Sans'] text-[12.6px] text-black">
          {legend.map(([name, color]) => (
            <div key={name} className="flex h-[19.17px] shrink-0 items-center gap-[9px] leading-[19px]">
              <span className={`h-[2px] w-[28px] ${color}`} />
              {name}
            </div>
          ))}
        </div>
      </div>
      <section className="h-[400px] w-[1576px] shrink-0 rounded-[10px] border border-[#31333f]/20 px-5">
        <div className="flex h-[78px] items-start pt-[18px] text-[15.65px] leading-[22px]">
          Select Stations from table
          <svg className="mr-[5px] ml-[5px]" width="21" height="21" viewBox="0 0 21 21">
            <path d="M.7.7H20.3V20.3H.7Z" fill="#0078d7" stroke="#111" strokeWidth="1.4" />
            <path d="M8.5 5H9.5Q11 5 11 7V14M8.5 12.3 11 15.2 13 12.3" fill="none" stroke="#fff" strokeWidth="1.5" />
          </svg>
          or from Map
          <svg className="ml-[5px]" width="21" height="21" viewBox="0 0 21 21">
            <path d="M.7.7H20.3V20.3H.7Z" fill="#0078d7" stroke="#111" strokeWidth="1.4" />
            <path d="M6 15 14.5 6.5M10 6H15V11" fill="none" stroke="#fff" strokeWidth="1.6" />
          </svg>
          <span className="mt-[5px] mr-[6px] ml-auto">
            <Chevron />
          </span>
        </div>
        <div className="grid h-[76px] grid-cols-[518px_518px_1fr] text-[17.85px]">
          <div className="pt-[4px] leading-[24px]">Total Number of Stations: 202</div>
          <Button className="w-[108px] bg-white">Select All</Button>
          <Button className="w-[130px] bg-white">Unselect All</Button>
        </div>
        <Label>Selected Items</Label>
        <div className="-mt-px flex h-[50px] items-center gap-[10px] rounded-[10px] bg-[#f0f2f6] pr-[19px] pl-[11px]">
          <Tag text="AU (MCQ)" width="w-[120px]" />
          <Tag text="BK (CMB)" width="w-[120px]" />
          <Tag text="CI (PASC)" width="w-[119px]" />
          <svg className="ml-auto" width="17" height="17" viewBox="0 0 17 17">
            <circle cx="8.5" cy="8.5" r="8.5" fill="#808495" />
            <path d="M5.5 5.5 11.5 11.5M11.5 5.5 5.5 11.5" stroke="#f0f2f6" strokeWidth="2" />
          </svg>
          <span className="ml-[4px] flex">
            <Chevron down bold />
          </span>
        </div>
        <div className="mt-5 flex h-[200px] overflow-hidden rounded-[10px] border border-[#e3e4e8] text-[15.65px]">
          <div className="w-[1523px]">
            <div className="flex h-[46px] border-b border-[#e1e3e8] bg-[#f8f9fb] text-[#31333f]/60">
              {columns.map((c) => (
                <div
                  key={c.name}
                  className={`flex shrink-0 items-center gap-[10px] overflow-hidden border-r border-[#e3e5ea] pl-[12px] whitespace-nowrap last:border-r-0 ${c.width}`}
                >
                  <EditIcon />
                  {c.name}
                </div>
              ))}
            </div>
            <div className="flex h-[46px]">
              {columns.map((c) => (
                <div
                  key={c.name}
                  className={`flex shrink-0 overflow-hidden border-r border-[#eceef1] px-[11px] pt-[10px] leading-[20px] whitespace-nowrap last:border-r-0 ${c.width} ${c.right ? "justify-end" : ""}`}
                >
                  {c.name === "is_selected" ? (
                    <span className="mt-[-3px] ml-[45px] flex size-[25px] justify-center rounded-[5px] bg-[#9a9ba3] pt-1.5">
                      <svg width="14" height="12" viewBox="0 0 14 12">
                        <path d="M1 6 5 10 13 1" fill="none" stroke="#fff" strokeWidth="2" />
                      </svg>
                    </span>
                  ) : (
                    c.value
                  )}
                </div>
              ))}
            </div>
          </div>
          <div className="w-[9px] bg-[#f0f0f0]">
            <div className="h-[23px] bg-[#cdcdcd]" />
          </div>
        </div>
      </section>
    </main>
  );
}

/** Hand-drawn marker strokes laid over the page. */
function Markers() {
  return (
    <svg width="2353" height="1275" className="pointer-events-none absolute inset-0 mix-blend-multiply">
      <g transform="translate(0 425) scale(.3954 .33333)" fill="#ff5b00">
        <path d="M89 778 150 773 200 779 260 778 360 787 360 773 500 770 520 767 540 772 580 793 630 833 670 893 690 937 707 990 707 1080 695 1113 640 1170 Q590 1205 583 1275L583 1320Q580 1338 560 1338L480 1341 420 1337 370 1325 320 1305 250 1270 180 1238 120 1200 89 1175 89 1122 130 1158 180 1187 250 1220 310 1243 370 1275 420 1290 480 1297 550 1295Q572 1290 572 1275L572 1230Q575 1190 610 1160L665 1105Q695 1070 694 1045L685 990 660 935 620 880 590 852 550 825 500 812 420 815 372 822 370 837 320 828 250 822 180 824 110 820Q98 822 89 833Z" />
      </g>
      <path
        fill="#28e800"
        fillRule="evenodd"
        d="M1724.4 112H1729L1730 118 1733.5 124 Q1740 120 1748 120L1778 119.7 1793.6 122.7 1813 126 1826 129 1841 139 1858.6 166 Q1866 180 1866 187.5V225Q1866 232 1862 234L1829 263.6Q1815 266 1802 263.6L1785 250 1774 233 1762 218 1754 200 1746 180 1740 162 1730 142 1725 132ZM1740 138 1746 150 1754 170 1760 187 1770 210 1789 234 Q1798 247 1804 247 1815 252 1825.7 247.5L1847.6 228.6 1860 212.5Q1863 200 1857.5 189L1849.5 175 1835 153 1809 141 1774 134.7 1748 135.7Z"
      />
    </svg>
  );
}

export default function App() {
  return (
    <div className="relative flex h-[1275px] w-[2353px] overflow-hidden bg-white font-['Noto_Sans_CJK_JP','Noto_Sans',sans-serif] text-[#31333f]">
      <Sidebar />
      <Main />
      <Markers />
    </div>
  );
}
